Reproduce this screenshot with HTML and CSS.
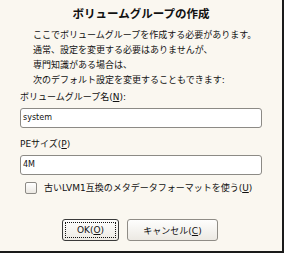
FILE: index.html
```html
<!DOCTYPE html>
<html>
<head>
    <meta charset="UTF-8">
    <title>ボリュームグループの作成</title>
    <link rel="stylesheet" href="styles.css">
</head>
<body>
<div class="dialog">
    <h1 class="title">ボリュームグループの作成</h1>
    <p class="intro">
        ここでボリュームグループを作成する必要があります。<br>
        通常、設定を変更する必要はありませんが、<br>
        専門知識がある場合は、<br>
        次のデフォルト設定を変更することもできます:
    </p>
    <label class="label">ボリュームグループ名(<u>N</u>):</label>
    <div class="field">system</div>
    <label class="label">PEサイズ(<u>P</u>)</label>
    <div class="field">4M</div>
    <div class="check">
        <span class="box"></span>
        <span>古いLVM1互換のメタデータフォーマットを使う(<u>U</u>)</span>
    </div>
    <div class="buttons">
        <button class="btn default"><span class="focus">OK(<u>O</u>)</span></button>
        <button class="btn cancel">キャンセル(<u>C</u>)</button>
    </div>
</div>
</body>
</html>
```

FILE: styles.css
```css
html, body {
    margin: 0;
    padding: 0;
}

.dialog {
    width: 284px;
    height: 253px;
    box-sizing: border-box;
    background: #faf7f0;
    border-right: 2px solid #1a1a1a;
    border-bottom: 2px solid #1a1a1a;
    padding: 5px 20px 0 20px;
    font-family: "DejaVu Sans", "Noto Sans CJK JP", sans-serif;
    font-size: 9px;
    color: #111;
}

.title {
    margin: 0;
    font-family: "Noto Sans CJK JP", sans-serif;
    font-size: 11.5px;
    line-height: 16px;
    font-weight: bold;
    text-align: center;
}

.intro {
    margin: 7px 0 0 13px;
    line-height: 15px;
}

.label {
    display: block;
    margin-top: 2px;
    line-height: 14px;
}

.field {
    margin-top: 4px;
    height: 20px;
    box-sizing: border-box;
    border: 1px solid #8c8a85;
    border-radius: 3px;
    background: #fff;
    padding: 0 2px;
    font-size: 8px;
    line-height: 18px;
}

.field + .label {
    margin-top: 9px;
}

.check {
    display: flex;
    align-items: center;
    gap: 7px;
    margin: 6px 0 0 5px;
    line-height: 14px;
}

.box {
    width: 10px;
    height: 10px;
    border: 1px solid #8c8a85;
    border-radius: 2px;
    background: linear-gradient(#ffffff, #ebe8e2);
}

.buttons {
    display: flex;
    justify-content: center;
    gap: 8px;
    margin-top: 24px;
    padding-right: 2px;
}

.btn {
    height: 22px;
    box-sizing: border-box;
    border: 1px solid #8f8c86;
    border-radius: 3px;
    background: linear-gradient(#fefefd, #ece9e3);
    font: inherit;
    color: #111;
    padding: 0;
}

.default {
    width: 57px;
    border-color: #3a3a3a;
    padding: 2px;
}

.focus {
    display: block;
    height: 100%;
    box-sizing: border-box;
    border: 1px dotted #111;
    line-height: 14px;
}

.cancel {
    width: 91px;
}
```
